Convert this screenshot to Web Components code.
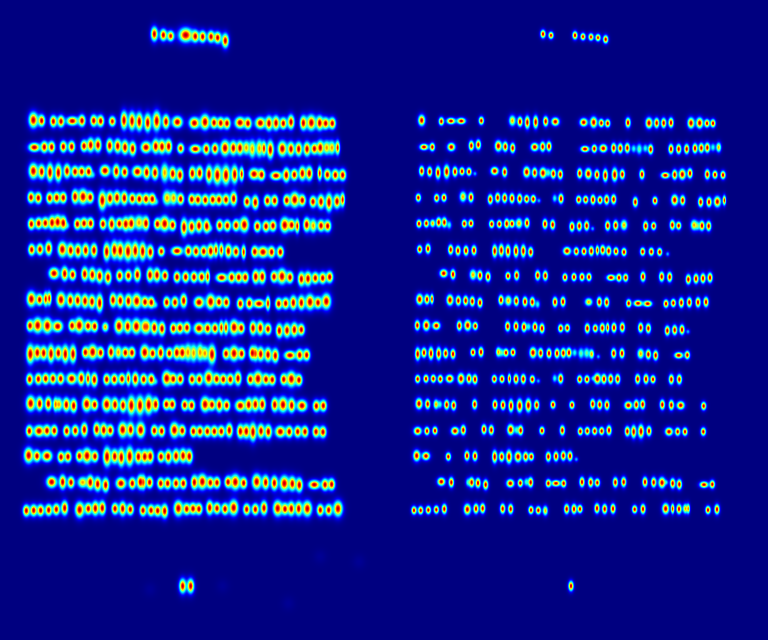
<!DOCTYPE html>
<html lang="en">
<head>
<meta charset="utf-8">
<meta name="viewport" content="width=device-width, initial-scale=1">
<title>Text score maps</title>
<style>
  html { background: #000080; }
  body { margin: 0; font-family: "Liberation Sans", sans-serif; }
</style>
</head>
<body>
<score-view>
  <score-map kind="region" aria-label="Character region score"></score-map>
  <score-map kind="affinity" aria-label="Character affinity score"></score-map>
</score-view>
<script>
// Each block: origin x, origin y, then peaks as "<shape><x>,<y>", in thirds of a pixel.
// A trailing "y" marks a weaker peak.
const MAPS = {
  region: { spread: [1.06, 1.18], blocks: [
    [420, 60, "b43,42 a70,45 s92,48 X137,45 a166,49 a188,50 a213,50 a233,53 b256,62"],
    [60, 315, `B40,45 a65,47 a100,49 a123,49 w157,48 a186,47 a221,47 a242,48 s277,49 c312,46 c336,48 c358,50 c383,53 C410,48 b438,50 W472,51
      w43,127 a73,126 a95,126 a130,125 a155,125 a192,123 b212,120 b234,120 b269,122 b293,123 b315,127 b338,131 W378,127 b407,124 b426,125 b446,124 s482,130
      B40,198 b65,200 c90,202 c115,203 b141,198 a165,200 a185,200 a206,200 d219,210 W255,197 b289,199 a314,201 W352,200 b380,202 b405,203 C434,203y b458,206 b480,210
      a33,277 a55,279 a89,279 a110,278 a130,278 b165,275 B189,275 a211,277 C247,286 b270,280 b291,278 b313,279 a337,281 a358,282 a378,282 a397,282 d409,291 B441,279y b461,279y a482,282
      a34,357 a56,355 a76,354 b96,353 b113,351 b130,354 d142,362 a172,357 a192,355 a212,355 a249,357 b275,357 a298,356 b317,357 b334,355 B357,353y b378,355 a412,357 B434,356 a458,360 c492,367`],
    [555, 315, `W28,54 B60,51 a87,53 a107,54 a126,55 W165,53 a189,55 W226,54 b252,55 b273,54 a295,55 b318,51 b355,54 B379,53 b404,54 a422,55 a442,55
      w31,132 a64,132 a90,131 B120,129 b145,129 b165,129 b184,128y c202,132y c223,130y n237,130 c256,134 B292,131 b318,132 b341,132 b366,132 a388,131 b406,128 b425,128y b441,128y n458,128
      b22,205 b44,204 c72,208 C97,210 C123,210 c149,208 n170,207 W207,207 a230,209 w273,212 b304,210 a328,209 b352,205 b373,205 n404,205 a427,209 a451,210 a473,210
      a20,283 a39,284 a61,285 a83,284 a102,284 a123,284 b146,281 a186,290 b211,292 a247,287 a269,287 a305,286 B329,284 a352,286 a384,290 b408,290 c432,292 b456,289 n473,284
      b20,365 b42,362 b65,363 d76,370 a104,361 a127,362 a153,361 B178,359 a217,364 a243,364 a264,362 B299,360 a320,360 n337,363 b365,359 b385,362y a408,362 a428,363`],
    [60, 705, `a35,44 a60,43 b86,40 B127,43 b152,46 b174,47 b197,46 b222,46 c260,50 c283,45 c301,47 C324,49 c346,47 c368,49 b391,51 s424,49 w471,48
      W102,115 b134,116 a158,119 b194,117 b217,119 b239,123 b264,127 a299,122 a325,122 b352,119 b390,120 b411,120 a435,122 a471,126 a497,126
      B34,192 a59,194 n77,192 n88,190 B123,194 b151,196 b173,196 b195,198 b216,200 c239,204 b279,195 b301,197 b325,198 B350,198 a375,201 a394,202 d407,210 a440,202 a465,202 b491,197
      a30,272 B53,271 B82,272 W113,274 a156,272 B178,271 a204,273 a224,274 s256,276y B297,273 b323,274 B349,274 b373,275y b382,275y b403,278 b426,281 a460,280 a480,279 a501,278
      C31,357 b52,353 b71,354 c93,356 b115,354 c136,357 c159,357 a196,352 B218,351 a242,353 b273,351 b295,352y a316,353 a336,353 B374,352 a398,355 b422,353 a448,355 b470,353 b487,353`],
    [555, 705, `a10,48 a33,49 a56,49 b77,48 n93,45 n109,45 b130,48 a153,50 n176,51 a209,50 W234,51 a260,51 a286,51
      a27,126 a50,126 n68,125 w110,128 a140,127 a161,127 a181,127 b212,125 b232,125 a267,125 B291,124 a315,127 b349,132 b369,131 a391,129 a413,129 a434,126
      W42,202 B77,200 a102,201 a124,202 a166,206 a193,205 w222,206 n249,205 a281,206 a302,205 b325,203 b349,203 B375,201 a399,203 B424,199
      W42,280 a68,280 a90,280 n109,278 n123,278 B147,277 a169,279 b204,279 b226,279 a249,282 b283,287 b306,286 b328,284 a349,284
      c9,352y c26,354y c45,352y b60,355y C81,358 a123,356 B147,355 a170,356 b202,354 n212,356y b227,357 b249,359 b271,362 w315,361 a344,360 a365,360`],
    [60, 1095, `a29,43 a55,42 a77,41 a99,41 a122,41 W155,41 b184,40 n204,41 b223,44 a260,43 a283,43 a306,42 n325,41 b346,42 a371,43 a394,43 d407,50 B440,40 a460,42 a481,42
      B32,115 b59,116 b85,116 n106,118y b117,118y b139,119 b161,122 B200,117 a224,119 B260,118 b285,119 b309,121 C334,121 C360,121 C386,119 b407,118 a439,118 a457,118 a494,120
      a28,198 W57,198 a81,197 a103,197 a140,198 a166,197 b193,194 b230,193 b251,195 a271,196 B308,194 b332,194 B362,195 a403,197 a425,198 B463,195 a487,197
      B26,271 a51,273 W81,273 a123,276 a144,275 a178,273 B201,272 a225,274 C261,275 b284,274 c304,277 C329,274 b355,275 b374,275 b391,274 a423,275 b445,275 b468,273 b489,272 b508,274
      W95,351 b128,351 a153,352 W188,352y b211,352 b233,357 b257,360 W303,355 a337,355 b361,351 n371,352y a389,352 a422,355 a443,355 a468,355 a490,355
      a19,437 a41,436 a62,436 a86,435 a109,433 b134,429 B179,434 a205,431 b226,430 b247,429 a285,431 b308,431 a331,433 a369,436 a393,436 a413,437 b434,438 B475,430 a500,432`],
    [555, 1095, `a21,43 a43,43 B71,39 a95,42 a115,43 a136,43 b159,40 a196,43 B219,41 a243,43 a262,44 a296,43 B319,42 a342,45
      a20,121 B60,118 a81,119 b103,120 a125,121 W166,122 b191,119 b211,118 b232,118 b269,119 B294,119 b320,121 W351,122 a394,123 a415,122
      a25,199 a45,199 a67,199 a88,199 a109,199 b133,196 b166,199 b184,199 c204,201 b228,198 b250,200 W286,200 a313,200 a338,200 a360,200 a393,200 a414,201
      b28,352 B52,350 a76,353 a96,353 a129,351 B151,351 a176,354 B215,350 b242,352 b268,354 B298,355 b322,356 b343,360 w388,359 a420,359 a440,358
      a24,431 a42,432 b74,428 a96,430 a120,432 B146,428 a185,433 a211,433 b237,429 B278,430 a300,432 b319,431 b341,431 B367,431 a406,435 a431,435 B459,431`],
    [420, 1620, "b128,138 b152,138 f30,148 f248,138 f540,50 f657,65 f445,190"]
  ] },
  affinity: { spread: [0.78, 0.82], blocks: [
    [0, 0, "a477,102 s501,106 a573,106 s597,110 s621,111 s642,113 a665,118 b561,1758"],
    [63, 315, `B50,46 a109,49 w138,48 w169,48 a229,47 B322,47y b345,50 c367,52 c392,51 b422,49 W451,50
      w57,126 a82,126 W139,126 b199,122 b220,119 B280,123 b301,125 b323,129 W389,126 b413,125 b432,124
      b50,198 b74,200 c99,203 C125,200 b150,200 a171,199 a192,200 d210,206 W269,198 b299,201 B365,201 b389,203 B414,204 q430,203 b445,206 b466,208
      a40,278 a95,279 a117,278 B174,275y b198,277 b256,283 b278,278 b299,279 b321,280 b344,281 a365,282 a385,282 d402,287 q449,280 b468,281
      a42,356 a64,355 a83,355y b101,352 b118,352 q133,360 a178,356 a198,355 a260,357 a283,357 b305,356 a321,356 B342,355y b366,354 b420,357 b443,359`],
    [543, 315, `W56,52 B86,52 a109,54 a128,55 b189,53 B252,54 b275,54 b296,54 b318,53 B378,54 B404,54 a426,55 a444,55
      w60,132 a88,131 W115,130 b146,129 b166,130 b187,129 q206,131 Q223,132 q241,130 b257,133 b318,132 b341,132 b365,132 b390,130 b409,129 b427,128 q444,127 b461,127y
      b44,205 B70,206 b96,209 c121,211 C149,209 b172,208 b231,208 w301,211 b329,209 B352,208 b375,205 b427,208 a450,209 a474,210
      a41,284 a62,284 b84,284 a105,285 b125,284 b146,283 b211,291 a270,287 B329,285 b353,286 b407,291 b432,291 B457,290 n478,286
      b21,365 b43,363 b65,362 d83,371 b128,362 b152,361 B177,360y b242,363 a266,363 b322,360 a341,362 B387,360y q398,363 b411,362 b431,363`],
    [63, 705, `a44,43 b69,41 b137,44 b159,47 b183,47 b207,46 c269,48 c289,46 c309,48 c333,48 c355,48 b377,51 W486,48 a514,49 a537,49 b559,48 n577,46 b593,45 b611,48 a633,49 a657,51 a713,50 a739,50 a764,51 d788,57
      W116,115 b144,118 B204,119y b225,121 b249,125 a309,123 b335,121 b398,121 b421,122 a480,127 a507,126 a531,126 a552,126 w618,128 a642,128 a662,128 b714,125 b770,125 b794,126 b850,133 b873,131 b894,130 b915,128
      B44,193 b66,193 n81,192 B135,195 b160,197 b182,197 b202,199 b225,203 b288,195 B310,197y b334,198 b360,200 b382,201 q398,208 b450,201 b474,200 W551,201y b583,201 b605,202 a671,205 w699,205 w728,206 a783,206 a805,204 b829,203 b853,202 b879,202 b903,201
      b37,271 B64,271 W94,272 b163,272 B188,271 a211,273 b308,274 b333,274 b357,276 q371,275 b390,276 b411,280 a467,280 a487,279 b547,280 a571,280 b592,279 n608,278 b627,278 b652,277 b707,278 b730,280 b787,287 b809,285 b831,284 d849,290
      c38,357 b57,353 c78,355 c101,356 b122,355 b144,357 a204,352 b228,351 b280,351y q290,353 a303,353 a324,352 B384,353 b407,354 b432,355 b456,355 b475,354 b492,353 q509,353 Q528,355 Q545,354 b560,357y d580,365 b626,355 b651,355 B707,356y b730,358 b752,361 w821,361 a847,360`],
    [63, 1095, `a38,42 a63,41 a85,41 a106,42 W134,41 B168,41 b192,41 b210,43 a268,42 a291,42 n313,41 b333,42 b355,42 a382,43 d400,48 q449,40 b467,41 a524,43 a546,43 d564,40 B577,41 b597,42 b617,42 b638,42 b698,42 b723,42 a744,43 b799,43 b823,43
      B42,116 b68,117 b93,118y q105,118 b125,119 b146,121 b209,118 b270,119 b294,120 c318,122 C344,122 C370,121 b395,120 a444,119 a501,120 b563,117 b584,119 b606,120 W670,121 b694,119 b713,118 b772,119 b799,120 W827,121 a896,123
      W38,198 a66,198 a90,197 W150,198 b175,195 b237,193 b259,195 B317,194 q335,195 b347,196 a411,197 b472,196 a526,199 a547,198 a569,198 a590,198 b612,196 b667,199 c686,200 C708,199 b732,198 W792,200 a818,200 a840,200 a895,200
      B35,272 W63,273 a130,275 b186,272 b210,273 c269,275 b290,275 C312,275 B339,275 b362,275 a379,275 b430,275 b453,274 b475,272 b495,273 d514,283
      W109,350 b139,352 q189,352 b200,352 b219,354 b242,359 W316,355 a346,354 q364,351 b377,352 a430,355 w453,355 a476,355 b531,351 b557,352 a577,353 b631,352 b656,351 b720,351 b746,352 B771,353 d784,352 b803,355 b823,358 w897,359 a922,358
      a27,436 a47,436 a70,435 a94,434 b118,432 B187,433 b213,431 b233,430 b293,431 b317,432 a378,435 a400,436 b421,437y b485,432 b507,432 a525,432 b576,430 b599,432 b624,431 a689,433 b714,432 B782,431 n803,431 b822,432 b841,431y n850,431y a909,435 b936,433`]
  ] }
};

// Shape: horizontal sigma, vertical sigma, peak value.
const SHAPES = {
  s: [6, 8, 0.9], a: [6, 9, 0.95], b: [6, 11, 0.95], c: [6, 14, 0.95],
  n: [4, 11, 0.88], B: [8, 12, 0.95], C: [7, 15, 0.95], w: [10, 7, 0.95],
  W: [9, 9, 0.95], X: [12, 11, 0.96], q: [6, 10, 0.4], Q: [7, 13, 0.48],
  d: [5, 6, 0.3], f: [12, 12, 0.02]
};
const UNIT = 3, WIDTH = 384, HEIGHT = 640, WEAK = 0.72;
const clamp = v => Math.max(0, Math.min(1, v));
const jet = v => [3, 2, 1].map(k => 255 * clamp(1.5 - Math.abs(4 * v - k)));

class ScoreMap extends HTMLElement {
  constructor() {
    super();
    this.attachShadow({ mode: "open" }).innerHTML = `
      <style>
        :host { display: block; min-width: 0; }
        canvas { display: block; width: 100%; height: auto; }
      </style>
      <canvas width="${WIDTH}" height="${HEIGHT}"></canvas>`;
  }
  connectedCallback() {
    this.setAttribute("role", "img");
    this.draw(MAPS[this.getAttribute("kind")]);
  }
  draw({ spread, blocks }) {
    const field = new Float32Array(WIDTH * HEIGHT);
    for (const [ox, oy, peaks] of blocks) {
      for (const [, shape, x, y, weak] of peaks.matchAll(/([A-Za-z])(\d+),(\d+)(y?)/g)) {
        const [sx, sy, top] = SHAPES[shape];
        this.addPeak(field, (ox + +x) / UNIT, (oy + +y) / UNIT,
          sx * spread[0] / UNIT, sy * spread[1] / UNIT, weak ? WEAK : top);
      }
    }
    const ctx = this.shadowRoot.querySelector("canvas").getContext("2d");
    const image = ctx.createImageData(WIDTH, HEIGHT);
    field.forEach((v, i) => image.data.set([...jet(v), 255], i * 4));
    ctx.putImageData(image, 0, 0);
  }
  // A sharp core plus a wider, fainter halo.
  addPeak(field, cx, cy, sx, sy, top) {
    const x1 = Math.min(WIDTH - 1, Math.ceil(cx + 5 * sx));
    const y1 = Math.min(HEIGHT - 1, Math.ceil(cy + 5 * sy));
    for (let y = Math.max(0, Math.floor(cy - 5 * sy)); y <= y1; y++) {
      for (let x = Math.max(0, Math.floor(cx - 5 * sx)); x <= x1; x++) {
        const dx = (x + 0.5 - cx) / sx, dy = (y + 0.5 - cy) / sy;
        const r = dx * dx + dy * dy;
        const v = top * (0.88 * Math.exp(-r / 2) + 0.12 * Math.exp(-r / 5));
        const i = y * WIDTH + x;
        field[i] = 1 - (1 - field[i]) * (1 - v);
      }
    }
  }
}

class ScoreView extends HTMLElement {
  constructor() {
    super();
    this.attachShadow({ mode: "open" }).innerHTML = `
      <style>
        :host { display: grid; grid-template-columns: 1fr 1fr; background: #000080; }
      </style>
      <slot></slot>`;
  }
}

customElements.define("score-map", ScoreMap);
customElements.define("score-view", ScoreView);
</script>
</body>
</html>
